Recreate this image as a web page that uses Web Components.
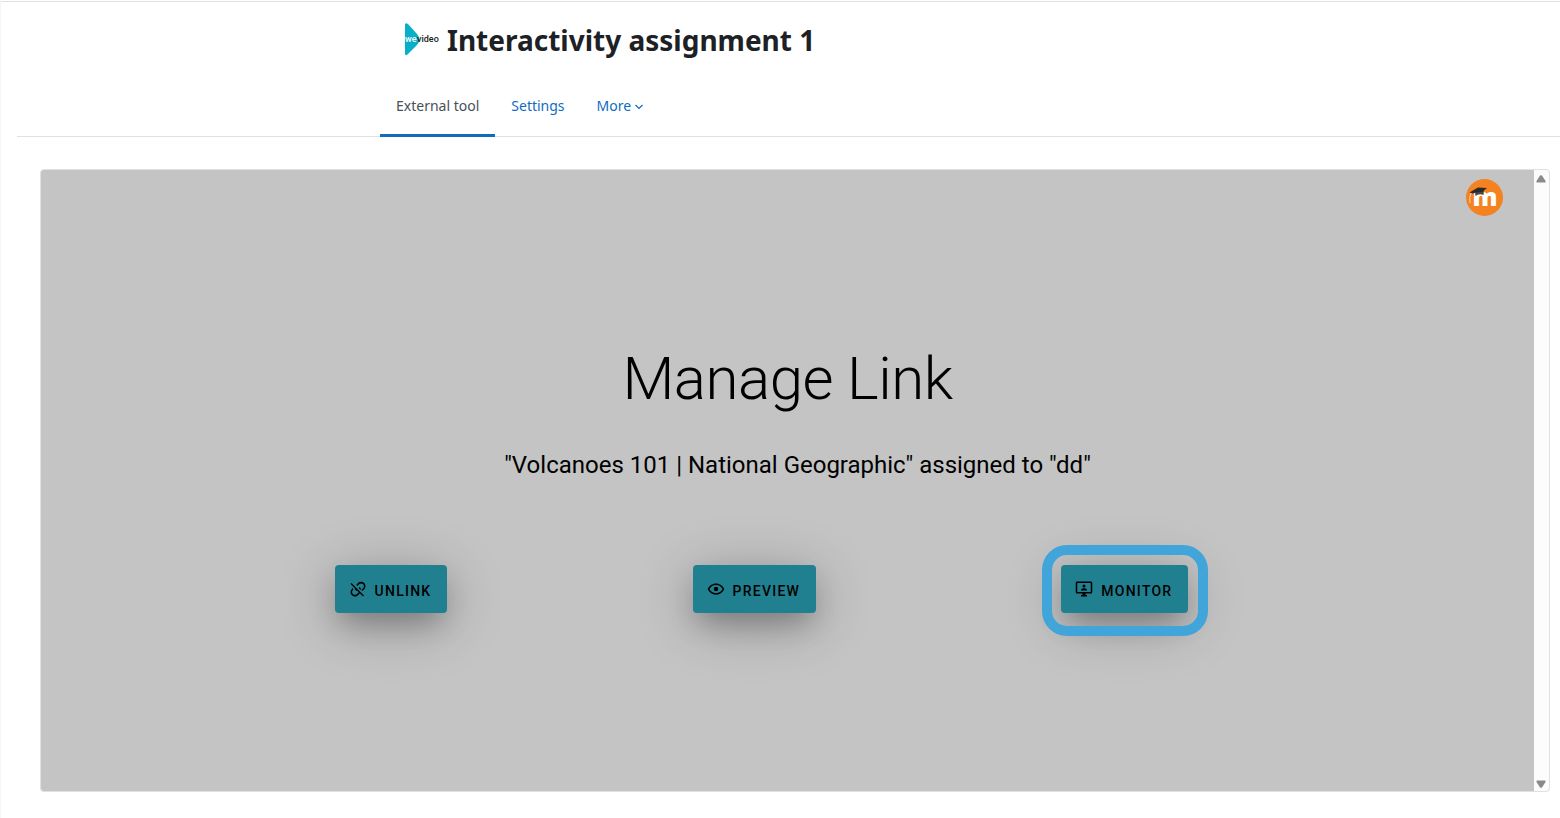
<!DOCTYPE html>
<html lang="en">
<head>
<meta charset="utf-8">
<meta name="viewport" content="width=device-width, initial-scale=1">
<title>Interactivity assignment 1</title>
<style>
html, body { margin: 0; height: 100%; background: #fff; }
</style>
</head>
<body>
<assignment-page></assignment-page>

<script>
function define(name, html) {
  const tpl = document.createElement('template');
  tpl.innerHTML = html;
  customElements.define(name, class extends HTMLElement {
    constructor() {
      super();
      this.attachShadow({ mode: 'open' }).append(tpl.content.cloneNode(true));
    }
  });
}

define('wevideo-logo', `
<style>
:host { display: block; width: 34px; height: 34px; }
svg { display: block; width: 34px; height: 34px; overflow: visible; }
text { font: 500 9px Roboto, sans-serif; }
</style>
<svg viewBox="0 0 34 34" role="img" aria-label="WeVideo">
  <path d="M1 2Q1 -1 4 1L13 11Q18 17 13 22L4 31Q1 34 1 30Z" fill="#07b0c6"/>
  <text x="1" y="19" fill="#fff">we</text>
  <text x="13" y="19" fill="#222">video</text>
</svg>`);

define('moodle-badge', `
<style>
:host { display: block; width: 37px; height: 37px; }
svg { display: block; width: 37px; height: 37px; overflow: visible; }
text { font: 800 25px/28px "Open Sans", sans-serif; }
</style>
<svg viewBox="0 0 37 37" role="img" aria-label="Moodle">
  <circle cx="18.500" cy="18.500" r="18.500" fill="#f58220"/>
  <text x="19" y="27" text-anchor="middle" fill="#fff">m</text>
  <path d="M9 13L16 12L18 11L17.500 16Q13 14 9.500 17Z" fill="#4a4743"/>
  <path d="M3.500 13.500L12 8.500L21 9L16 13Q10 12.500 7 14.500Z" fill="#2b2a29"/>
  <path d="M5 14Q3 18 4 24" fill="none" stroke="#fbd9b8" stroke-width="1"/>
</svg>`);

define('page-header', `
<style>
:host { display: flex; align-items: center; gap: 9px; height: 40px; }
::slotted(h1) { margin: 0; font: 700 28px/40px "Noto Sans", sans-serif; color: #1d2125; }
</style>
<slot name="logo"></slot><slot></slot>`);

define('nav-tab', `
<style>
:host { display: block; }
::slotted(a) {
  display: flex; align-items: center; gap: 4px; box-sizing: border-box; height: 63px;
  padding: 4px 16px 0; border-bottom: 3px solid transparent; color: #0f6cbf;
  font: 400 14px/22px "Noto Sans", sans-serif; text-decoration: none; white-space: nowrap;
}
:host([active]) ::slotted(a) { border-bottom-color: #0f6cbf; color: #495057; }
</style>
<slot></slot>`);

define('tab-bar', `
<style>
:host { display: block; border-bottom: 1px solid #dee2e6; }
nav { display: flex; width: 830px; max-width: 100%; margin: 0 auto -1px; }
</style>
<nav aria-label="Activity"><slot></slot></nav>`);

define('action-button', `
<style>
:host { display: block; position: relative; }
button {
  display: flex; align-items: center; gap: 8px; height: 48px; margin: 0; padding: 0 16px 0 14px;
  border: 0; border-radius: 4px; background: #208090; color: #000; cursor: pointer;
  font: 500 14px/20px Roboto, sans-serif; letter-spacing: 1.25px;
  box-shadow: 0 10px 56px rgba(0,0,0,.28), 0 14px 28px -6px rgba(0,0,0,.25);
}
.label { padding-top: 4px; }
::slotted(svg) { display: block; width: 18px; height: 18px; fill: #000; }
.ring { display: none; }
:host([highlighted]) .ring {
  display: block; position: absolute; inset: -20px -20px -23px -19px; box-sizing: border-box;
  border: 10px solid #42a5da; border-radius: 25px; pointer-events: none;
}
</style>
<button type="button"><slot name="icon"></slot><span class="label"><slot></slot></span></button>
<div class="ring"></div>`);

define('scroll-rail', `
<style>
:host {
  display: flex; flex-direction: column; justify-content: space-between; align-items: center;
  box-sizing: border-box; width: 15px; padding: 5px 1px 3px 0; background: #fcfcfc;
}
svg { display: block; width: 10px; height: 8px; fill: #8a8a8a; }
</style>
<svg viewBox="0 0 10 8" aria-hidden="true"><path d="M4 .6Q5 -.3 6 .6L9.500 6Q10 7.500 8.500 7.500H1.500Q0 7.500 .5 6Z"/></svg>
<svg viewBox="0 0 10 8" aria-hidden="true"><path d="M4 7.400Q5 8.300 6 7.400L9.500 2Q10 .5 8.500 .5H1.500Q0 .5 .5 2Z"/></svg>`);

define('tool-frame', `
<style>
:host {
  display: flex; box-sizing: border-box; overflow: hidden;
  border: 1px solid #dee2e6; border-radius: 4px; background: #c4c4c4;
}
.stage { position: relative; flex: 1; min-width: 0; padding: 173px 0 32px; color: #000; font-family: Roboto, sans-serif; }
.badge { position: absolute; top: 9px; right: 31px; }
h2 { margin: 0; font-size: 60px; line-height: 72px; font-weight: 300; letter-spacing: -0.5px; text-align: center; }
p { margin: 34px 0 0; padding-left: 20px; font-size: 24px; line-height: 32px; text-align: center; }
.actions { display: flex; justify-content: space-around; margin: 84px 223px 0 171px; }
</style>
<div class="stage">
  <moodle-badge class="badge"></moodle-badge>
  <h2>Manage Link</h2>
  <p>"Volcanoes 101 | National Geographic" assigned to "dd"</p>
  <div class="actions">
    <action-button>
      <svg slot="icon" viewBox="0 0 24 24" aria-hidden="true"><path d="M2 5.270L3.280 4L20 20.720L18.730 22L14.500 17.800L12.100 20.200C9.800 22.500 6.100 22.500 3.800 20.200S1.500 14.200 3.800 11.900L5.300 10.400C5.300 11.200 5.400 12 5.700 12.800L5.200 13.300C3.700 14.700 3.700 17.200 5.200 18.700S9.100 20.200 10.600 18.700L13 16.300L10.600 13.900C10.300 14.600 9.600 14.500 9.200 14.100C8 13 7.500 11.500 7.500 10.800L2 5.270M12 4.100C14.300 1.800 18 1.800 20.300 4.100S22.600 10.100 20.300 12.400L18 14.700L16.600 13.300L18.900 11C20.300 9.500 20.300 7 18.900 5.600S15 4.100 13.500 5.600L11.100 8L9.700 6.600L12 4.100M14.200 9.200C15.800 10.600 16 12.300 15.500 13.500L13.500 11.300C13.500 10.900 13.200 10.700 12.900 10.400Z"/></svg>
      UNLINK</action-button>
    <action-button>
      <svg slot="icon" viewBox="0 0 24 24" aria-hidden="true"><path d="M12,9A3,3 0 0,1 15,12A3,3 0 0,1 12,15A3,3 0 0,1 9,12A3,3 0 0,1 12,9M12,4.500C17,4.500 21.270,7.610 23,12C21.270,16.390 17,19.500 12,19.500C7,19.500 2.730,16.390 1,12C2.730,7.610 7,4.500 12,4.500M3.180,12C4.830,15.360 8.240,17.500 12,17.500C15.760,17.500 19.170,15.360 20.820,12C19.170,8.640 15.760,6.500 12,6.500C8.240,6.500 4.830,8.640 3.180,12Z"/></svg>
      PREVIEW</action-button>
    <action-button highlighted>
      <svg slot="icon" viewBox="0 0 24 24" aria-hidden="true"><path d="M21,16V4H3V16H21M21,2A2,2 0 0,1 23,4V16A2,2 0 0,1 21,18H14V20H16V22H8V20H10V18H3C1.890,18 1,17.100 1,16V4C1,2.890 1.890,2 3,2H21M12,6A2,2 0 0,1 14,8A2,2 0 0,1 12,10A2,2 0 0,1 10,8A2,2 0 0,1 12,6M8,14V13C8,11.670 10.670,11 12,11C13.330,11 16,11.670 16,13V14H8Z"/></svg>
      MONITOR</action-button>
  </div>
</div>
<scroll-rail></scroll-rail>`);

define('assignment-page', `
<style>
:host {
  display: flex; flex-direction: column; box-sizing: border-box; min-height: 100vh; overflow: hidden;
  padding: 20px 0 26px; border-left: 1px solid #f5f5f5;
  background: linear-gradient(#dee2e6, #dee2e6) 0 1px / 100% 1px no-repeat #fff;
}
.wide { margin: 0 -13px 0 16px; }
page-header { width: 782px; max-width: 100%; margin: 0 auto; }
tab-bar { margin-top: 14px; }
tool-frame { flex: 1; margin: 32px 10px 0 39px; }
.chevron { width: 8px; height: 6px; margin-top: 1px; }
</style>
<div class="wide">
  <page-header><wevideo-logo slot="logo"></wevideo-logo><h1>Interactivity assignment 1</h1></page-header>
  <tab-bar>
    <nav-tab active><a href="#tool" aria-current="page">External tool</a></nav-tab>
    <nav-tab><a href="#settings">Settings</a></nav-tab>
    <nav-tab><a href="#more">More<svg class="chevron" viewBox="0 0 8 6" aria-hidden="true"><path d="M.5 1L4 4.500L7.500 1" fill="none" stroke="#0f6cbf" stroke-width="1.200"/></svg></a></nav-tab>
  </tab-bar>
</div>
<tool-frame></tool-frame>`);
</script>
</body>
</html>
